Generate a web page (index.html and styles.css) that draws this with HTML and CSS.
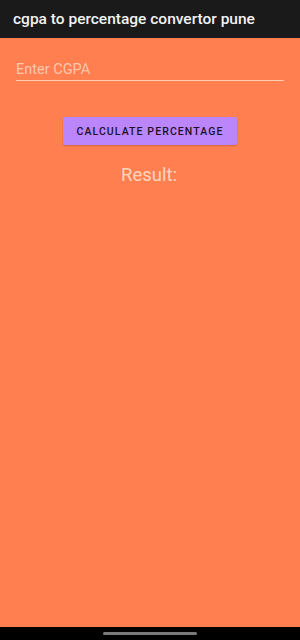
FILE: index.html
```html
<!DOCTYPE html>
<html>
<head>
<meta charset="utf-8">
<link rel="stylesheet" href="styles.css">
</head>
<body>
<div class="screen">
  <header class="appbar">cgpa to percentage convertor pune</header>
  <main class="content">
    <div class="field"><span class="placeholder">Enter CGPA</span></div>
    <button class="btn">CALCULATE PERCENTAGE</button>
    <div class="result">Result:</div>
  </main>
  <div class="navbar"><div class="handle"></div></div>
</div>
</body>
</html>
```
FILE: styles.css
```css
html, body { margin: 0; padding: 0; }
body { width: 300px; height: 640px; overflow: hidden; font-family: Roboto, "Noto Sans", sans-serif; }
.screen { display: flex; flex-direction: column; height: 640px; background: #ff7f50; }
.appbar {
  height: 38px; box-sizing: border-box; background: #1a1a1a; color: #f2f2f2;
  font-size: 15.5px; font-weight: 500; padding: 10px 0 0 13px; white-space: nowrap;
}
.content { flex: 1; display: flex; flex-direction: column; align-items: center; padding: 0 16px; }
.field {
  align-self: stretch; margin-top: 22px; height: 20px; border-bottom: 1px solid rgba(255,230,210,0.75);
}
.placeholder { color: rgba(255,220,200,0.8); font-size: 14.5px; line-height: 20px; display: block; }
.btn {
  margin-top: 36px; width: 174px; height: 28px; border: none; border-radius: 2px;
  background: #bb86fc; color: #1a1028; font-family: Roboto, sans-serif; font-size: 10.5px;
  font-weight: 500; letter-spacing: 1.1px; padding: 0; box-shadow: 0 1px 2px rgba(0,0,0,0.2);
}
.result { margin-top: 19px; font-size: 18.5px; line-height: 22px; color: rgba(255,225,205,0.9); margin-left: -2px; }
.navbar { height: 13px; background: #000; display: flex; justify-content: center; align-items: center; }
.handle { width: 94px; height: 2.5px; border-radius: 2px; background: #7a7a7a; }
```
